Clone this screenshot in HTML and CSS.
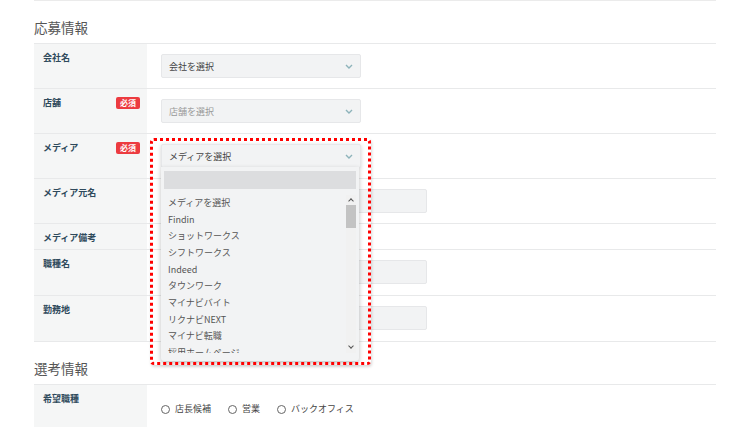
FILE: index.html
```html
<!DOCTYPE html>
<html lang="ja">

<head>
    <meta charset="UTF-8">
    <meta name="viewport" content="width=device-width, initial-scale=1.0">
    <title>応募者登録</title>
    <link rel="stylesheet" href="styles.css">
</head>

<body>
    <div class="page">
        <div class="top-line"></div>

        <!-- 応募情報 -->
        <section class="form-section">
            <h2>応募情報</h2>
            <div class="form-table">
                <div class="form-row">
                    <div class="label">会社名</div>
                    <div class="field">
                        <div class="select">
                            <span>会社を選択</span>
                            <svg class="chevron" width="8" height="5" viewBox="0 0 8 5"><polyline points="1,1 4,4 7,1" /></svg>
                        </div>
                    </div>
                </div>
                <div class="form-row">
                    <div class="label">店舗 <span class="required">必須</span></div>
                    <div class="field">
                        <div class="select placeholder">
                            <span>店舗を選択</span>
                            <svg class="chevron" width="8" height="5" viewBox="0 0 8 5"><polyline points="1,1 4,4 7,1" /></svg>
                        </div>
                    </div>
                </div>
                <div class="form-row">
                    <div class="label">メディア <span class="required">必須</span></div>
                    <div class="field">
                        <div class="select open">
                            <span>メディアを選択</span>
                            <svg class="chevron" width="8" height="5" viewBox="0 0 8 5"><polyline points="1,1 4,4 7,1" /></svg>

                            <div class="dropdown">
                                <div class="search"></div>
                                <div class="options">
                                    <ul>
                                        <li>メディアを選択</li>
                                        <li>Findin</li>
                                        <li>ショットワークス</li>
                                        <li>シフトワークス</li>
                                        <li>Indeed</li>
                                        <li>タウンワーク</li>
                                        <li>マイナビバイト</li>
                                        <li>リクナビNEXT</li>
                                        <li>マイナビ転職</li>
                                        <li>採用ホームページ</li>
                                    </ul>
                                    <div class="scrollbar">
                                        <span class="arrow up"></span>
                                        <span class="thumb"></span>
                                        <span class="arrow down"></span>
                                    </div>
                                </div>
                            </div>
                            <div class="highlight"></div>
                        </div>
                    </div>
                </div>
                <div class="form-row">
                    <div class="label">メディア元名</div>
                    <div class="field">
                        <div class="input"></div>
                    </div>
                </div>
                <div class="form-row short">
                    <div class="label">メディア備考</div>
                    <div class="field"></div>
                </div>
                <div class="form-row tall">
                    <div class="label">職種名</div>
                    <div class="field">
                        <div class="input"></div>
                    </div>
                </div>
                <div class="form-row tall">
                    <div class="label">勤務地</div>
                    <div class="field">
                        <div class="input"></div>
                    </div>
                </div>
            </div>
        </section>

        <!-- 選考情報 -->
        <section class="form-section">
            <h2>選考情報</h2>
            <div class="form-table">
                <div class="form-row">
                    <div class="label">希望職種</div>
                    <div class="field radios">
                        <label class="radio"><span class="circle"></span>店長候補</label>
                        <label class="radio"><span class="circle"></span>営業</label>
                        <label class="radio"><span class="circle"></span>バックオフィス</label>
                    </div>
                </div>
            </div>
        </section>
    </div>
</body>

</html>
```

FILE: styles.css
```css
body {
    margin: 0;
    background: #fff;
    font-family: "Noto Sans CJK JP", "Noto Sans", sans-serif;
    color: #555;
}

.page {
    margin-left: 34px;
    width: 682px;
}

.top-line {
    height: 1px;
    background: #ebebeb;
}

.form-section h2 {
    margin: 16px 0 6px;
    font-size: 13.5px;
    line-height: 20px;
    font-weight: normal;
    color: #555;
}

.form-table {
    border-bottom: 1px solid #e8e9ea;
}

.form-row {
    display: grid;
    grid-template-columns: 113px 1fr;
    border-top: 1px solid #e8e9ea;
    min-height: 44px;
}

.form-row.short {
    min-height: 25px;
}

.form-row.tall {
    min-height: 45px;
}

.label {
    display: flex;
    justify-content: space-between;
    align-items: flex-start;
    background: #f5f6f6;
    padding: 7px 7px 4px 9px;
    font-size: 9px;
    line-height: 14px;
    font-weight: bold;
    color: #2f4a5c;
}

.required {
    margin-top: 1px;
    padding: 0 4px;
    height: 12px;
    line-height: 12px;
    font-size: 8px;
    font-weight: bold;
    color: #fff;
    background: #ec3b40;
    border-radius: 2px;
}

.field {
    padding: 10px 14px;
}

.select {
    position: relative;
    box-sizing: border-box;
    width: 200px;
    height: 24px;
    display: flex;
    align-items: center;
    justify-content: space-between;
    padding: 0 7px 0 7px;
    background: #f2f3f4;
    border: 1px solid #e6e7e9;
    border-radius: 2px;
    font-size: 9px;
    color: #444;
}

.select.placeholder {
    color: #999;
}

.chevron {
    fill: none;
    stroke: #8db3ba;
    stroke-width: 1.4;
}

.select.open {
    box-shadow: 0 1px 4px rgba(0, 0, 0, 0.18);
    z-index: 2;
}

.dropdown {
    position: absolute;
    top: 22px;
    left: -1px;
    width: 198px;
    height: 194px;
    padding: 4px 3px 0;
    box-sizing: border-box;
    background: #f2f3f4;
    box-shadow: 0 2px 5px rgba(0, 0, 0, 0.25);
    border-radius: 0 0 3px 3px;
}

.search {
    height: 18px;
    background: #dcdddf;
}

.options {
    position: relative;
    margin-top: 6px;
    height: 158px;
    overflow: hidden;
}

.options ul {
    list-style: none;
    margin: 0;
    padding: 0 0 0 4px;
}

.options li {
    height: 16.67px;
    line-height: 16.67px;
    font-size: 9px;
    color: #555;
    white-space: nowrap;
}

.scrollbar {
    position: absolute;
    top: 0;
    right: 0;
    width: 10px;
    height: 158px;
    background: #f1f1f1;
}

.thumb {
    position: absolute;
    top: 10px;
    left: 0;
    width: 10px;
    height: 23px;
    background: #c3c3c3;
}

.arrow {
    position: absolute;
    left: 3px;
    width: 3px;
    height: 3px;
    border-left: 1.2px solid #555;
    border-top: 1.2px solid #555;
}

.arrow.up {
    top: 4px;
    transform: rotate(45deg);
}

.arrow.down {
    bottom: 5px;
    transform: rotate(225deg);
}

.highlight {
    position: absolute;
    top: -7px;
    left: -12px;
    width: 221px;
    height: 227px;
    box-sizing: border-box;
    border: 3px dotted #f00;
    border-radius: 4px;
    box-shadow: 1px 2px 3px rgba(0, 0, 0, 0.15);
    pointer-events: none;
}

.input {
    width: 266px;
    height: 24px;
    box-sizing: border-box;
    background: #f2f3f4;
    border: 1px solid #e6e7e9;
    border-radius: 2px;
}

.radios {
    display: flex;
    align-items: center;
    padding: 13px 14px 9px;
}

.radio {
    display: flex;
    align-items: center;
    margin-right: 17px;
    font-size: 9px;
    line-height: 14px;
    color: #444;
}

.circle {
    width: 7px;
    height: 7px;
    border: 1px solid #666;
    border-radius: 50%;
    margin-right: 5px;
}
```
